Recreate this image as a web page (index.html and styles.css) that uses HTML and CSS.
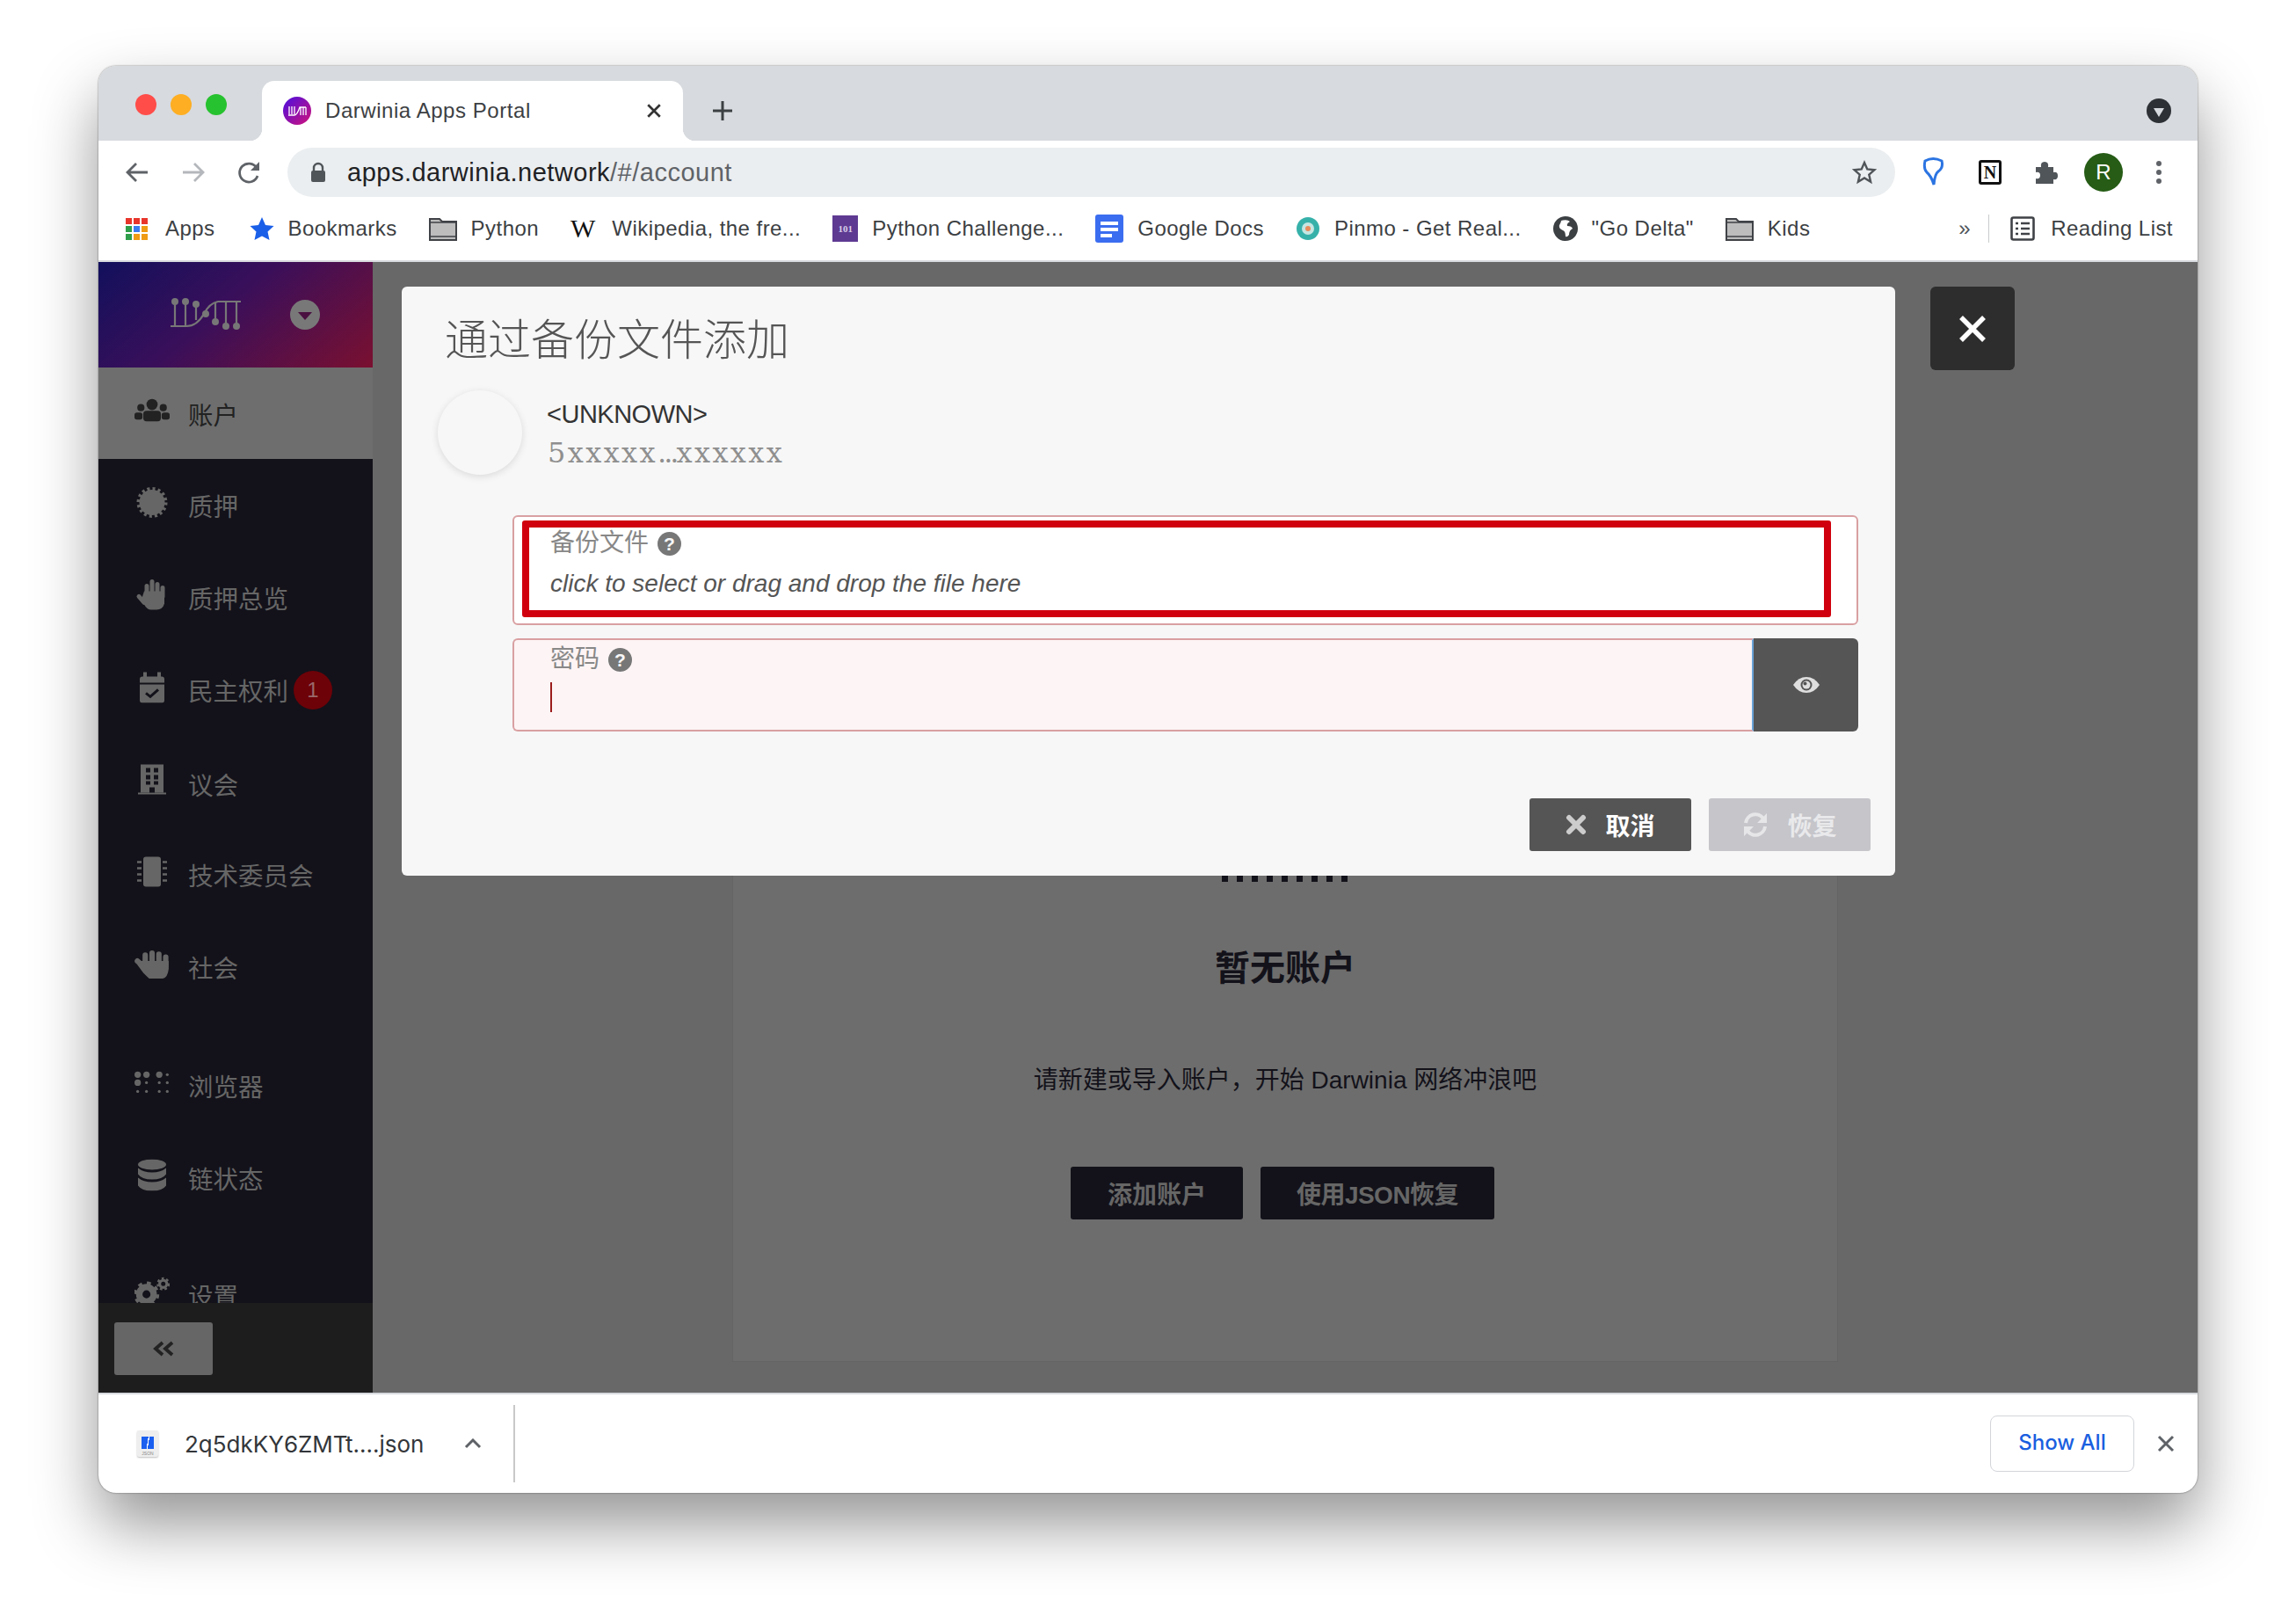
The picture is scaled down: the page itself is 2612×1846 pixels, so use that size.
FILE: index.html
```html
<!DOCTYPE html>
<html lang="zh">
<head>
  <meta charset="UTF-8">
  <title>Darwinia Apps Portal</title>
  <link rel="stylesheet" href="styles.css">
</head>
<body>
  <div class="window">
    <div class="tabbar">
      <div class="traffic">
        <span class="light red"></span>
        <span class="light yellow"></span>
        <span class="light green"></span>
      </div>
      <div class="tab">
        <svg class="favicon" viewBox="0 0 32 32">
          <defs><linearGradient id="fav" x1="0" y1="0" x2="1" y2="1"><stop offset="0" stop-color="#4a0fe0"/><stop offset="1" stop-color="#d1127a"/></linearGradient></defs>
          <circle cx="16" cy="16" r="16" fill="url(#fav)"/>
          <path d="M7 11v9M10 11v9M13 11v9M6 21h7q3 0 6-9h7M20 12v9M23 12v9M26 12v9" stroke="#fff" stroke-width="1.3" fill="none"/>
        </svg>
        <span class="tab-title">Darwinia Apps Portal</span>
        <svg class="tab-close" viewBox="0 0 16 16"><path d="M2 2l12 12M14 2L2 14" stroke="#333" stroke-width="2.4"/></svg>
      </div>
      <svg class="new-tab" viewBox="0 0 24 24"><path d="M12 1v22M1 12h22" stroke="#3c4043" stroke-width="3"/></svg>
      <span class="tab-menu"><svg viewBox="0 0 28 28"><circle cx="14" cy="14" r="14" fill="#2d3034"/><path d="M8 11h12l-6 10z" fill="#d7dade"/></svg></span>
    </div>

    <div class="toolbar">
      <svg class="nav-icon" viewBox="0 0 28 28"><path d="M26 14H4M13 4L3 14l10 10" stroke="#5f6368" stroke-width="2.8" fill="none"/></svg>
      <svg class="nav-icon" viewBox="0 0 28 28"><path d="M2 14h22M15 4l10 10-10 10" stroke="#b4b7bb" stroke-width="2.8" fill="none"/></svg>
      <svg class="nav-icon" viewBox="0 0 28 28"><path d="M23 18a10.500 10.500 0 1 1-1-9" stroke="#5f6368" stroke-width="2.8" fill="none"/><path d="M25 2v10H15z" fill="#5f6368"/></svg>
      <div class="omnibox">
        <svg class="lock" viewBox="0 0 18 24"><path d="M4 10V7a5 5 0 0 1 10 0v3" stroke="#50555a" stroke-width="2.400" fill="none"/><rect x="1" y="10" width="16" height="13" rx="2" fill="#50555a"/></svg>
        <span class="url"><b>apps.darwinia.network</b>/#/account</span>
        <svg class="star" viewBox="0 0 28 28"><path d="M14 3l3.300 7.500 8 .8-6 5.400 1.800 8L14 20.500 6.900 24.700l1.800-8-6-5.400 8-.8z" stroke="#50555a" stroke-width="2.400" fill="none"/></svg>
      </div>
      <div class="extensions">
        <svg class="ext pin" viewBox="0 0 28 36"><path d="M5 5q9-5 19 0 2 8-4 12-4 3-5 15-3-10-8-14Q3 14 5 5z" stroke="#2b74e2" stroke-width="3" fill="none"/></svg>
        <span class="ext notion">N</span>
        <svg class="ext puzzle" viewBox="0 0 28 28"><path d="M3 8h6q-1-6 4-6t4 6h6v6q5-1 5 4t-5 4v5H3v-6q5 1 5-3.500T3 14z" fill="#50555a"/></svg>
        <span class="avatar">R</span>
        <span class="dots"><i></i><i></i><i></i></span>
      </div>
    </div>

    <div class="bookmarks">
      <div class="bm bm-apps">
        <span class="apps-grid">
          <i class="c-r"></i><i class="c-r"></i><i class="c-r"></i>
          <i class="c-g"></i><i class="c-b"></i><i class="c-o"></i>
          <i class="c-g"></i><i class="c-o"></i><i class="c-o"></i>
        </span>
        <span>Apps</span>
      </div>
      <div class="bm">
        <svg class="bm-icon" viewBox="0 0 28 28"><path d="M14 1l4 9 9.500 1-7 6.500 2 9.500L14 22.500 5.500 27l2-9.500-7-6.500 9.500-1z" fill="#1a5fe8"/></svg>
        <span>Bookmarks</span>
      </div>
      <div class="bm">
        <svg class="bm-icon folder" viewBox="0 0 32 28"><path d="M1 3h11l3 3h16v21H1z" fill="#bdbdbd" stroke="#3f4246" stroke-width="2"/><path d="M1 7h30M1 23h30" stroke="#3f4246" stroke-width="1.500"/></svg>
        <span>Python</span>
      </div>
      <div class="bm bm-wiki">
        <span class="wiki">W</span>
        <span>Wikipedia, the fre...</span>
      </div>
      <div class="bm">
        <span class="py101">101</span>
        <span>Python Challenge...</span>
      </div>
      <div class="bm">
        <svg class="bm-icon docs" viewBox="0 0 32 32"><rect width="32" height="32" rx="3" fill="#3b6df0"/><path d="M6 8h20v4H6zM6 15h20v4H6zM6 22h13v4H6z" fill="#fff"/></svg>
        <span>Google Docs</span>
      </div>
      <div class="bm">
        <svg class="bm-icon" viewBox="0 0 28 28"><circle cx="14" cy="14" r="13" fill="#36b1aa"/><circle cx="14" cy="14" r="7" fill="#c5e6e2"/><circle cx="14" cy="14" r="3" fill="#e88a5a"/></svg>
        <span>Pinmo - Get Real...</span>
      </div>
      <div class="bm">
        <svg class="bm-icon" viewBox="0 0 28 28"><circle cx="14" cy="14" r="14" fill="#3c4043"/><path d="M9 5q7-2 10 1-4 2-3 5 5 0 6 3-4 2-4 7-2 3-4 2 0-6-3-7-5-2-4-6 2-3 2-5z" fill="#fff"/></svg>
        <span>"Go Delta"</span>
      </div>
      <div class="bm">
        <svg class="bm-icon folder" viewBox="0 0 32 28"><path d="M1 3h11l3 3h16v21H1z" fill="#bdbdbd" stroke="#3f4246" stroke-width="2"/><path d="M1 7h30M1 23h30" stroke="#3f4246" stroke-width="1.500"/></svg>
        <span>Kids</span>
      </div>
      <div class="bm-more">»</div>
      <div class="bm-reading">
        <svg class="bm-icon" viewBox="0 0 28 28"><rect x="1.500" y="1.500" width="25" height="25" rx="2" fill="none" stroke="#3f4246" stroke-width="2.600"/><path d="M6 8h3M6 14h3M6 20h3M12 8h10M12 14h10M12 20h10" stroke="#3f4246" stroke-width="2.600"/></svg>
        <span>Reading List</span>
      </div>
    </div>

    <div class="app">
      <aside class="sidebar">
        <div class="side-head">
          <svg class="logo" viewBox="0 0 82 38" fill="none" stroke="#777" stroke-width="2.200">
            <path d="M1 32h18q12 0 20-14 6-12 16-14h26"/>
            <path d="M6 4v27M18 4v27M30 6v19M52 5v24M64 5v28M76 5v28"/>
            <g fill="#777" stroke="none"><circle cx="6" cy="4" r="4"/><circle cx="18" cy="4" r="4"/><circle cx="30" cy="7" r="4"/><circle cx="41" cy="18" r="4"/><circle cx="52" cy="27" r="4"/><circle cx="64" cy="32" r="4"/><circle cx="76" cy="32" r="4"/></g>
          </svg>
          <span class="side-drop"><svg viewBox="0 0 34 34"><circle cx="17" cy="17" r="17" fill="#787878"/><path d="M9 14h16l-8 9z" fill="#4a1040"/></svg></span>
        </div>
        <nav class="side-nav">
          <a class="side-item active">
            <svg class="side-icon" viewBox="0 0 44 28" fill="#222"><circle cx="22" cy="7" r="7"/><circle cx="8" cy="11" r="4.500"/><circle cx="36" cy="11" r="4.500"/><rect x="11" y="15" width="22" height="13" rx="4"/><rect y="17" width="10" height="9" rx="3"/><rect x="34" y="17" width="10" height="9" rx="3"/></svg>
            <span>账户</span>
          </a>
          <a class="side-item">
            <svg class="side-icon" viewBox="0 0 36 36"><circle cx="18" cy="18" r="14.500" fill="#666"/><circle cx="18" cy="18" r="15.500" fill="none" stroke="#666" stroke-width="4" stroke-dasharray="3 3.090"/></svg>
            <span>质押</span>
          </a>
          <a class="side-item">
            <svg class="side-icon" viewBox="0 0 36 36"><g stroke="#666" stroke-width="5" stroke-linecap="round"><path d="M12 18V8M18 16V3M24 16V6M30 20V10M3 20l6 7"/></g><path d="M9 14h23v14q-2 7-9 7h-6q-5 0-8-6l-3-6z" fill="#666"/></svg>
            <span>质押总览</span>
          </a>
          <a class="side-item">
            <svg class="side-icon" viewBox="0 0 32 36"><path d="M2 9q0-3 3-3h22q3 0 3 3v4H2zM2 15h28v18q0 3-3 3H5q-3 0-3-3z" fill="#666"/><path d="M8 1v6M24 1v6" stroke="#666" stroke-width="4"/><path d="M9 25l5 4 9-8" stroke="#13121a" stroke-width="3" fill="none"/></svg>
            <span>民主权利</span>
            <em class="badge">1</em>
          </a>
          <a class="side-item low">
            <svg class="side-icon" viewBox="0 0 32 36"><path d="M3 1h26v32H3z" fill="#666"/><path d="M0 33h32v2H0z" fill="#666"/><path d="M9 5h5v5H9zM18 5h5v5h-5zM9 13h5v5H9zM18 13h5v5h-5zM9 20h5v4H9zM18 20h5v4h-5zM13 27h6v6h-6z" fill="#13121a"/></svg>
            <span>议会</span>
          </a>
          <a class="side-item">
            <svg class="side-icon" viewBox="0 0 36 36"><rect x="8" y="1" width="20" height="34" rx="3" fill="#666"/><path d="M1 7h5M1 14h5M1 21h5M1 28h5M30 7h5M30 14h5M30 21h5M30 28h5" stroke="#666" stroke-width="2.500"/></svg>
            <span>技术委员会</span>
          </a>
          <a class="side-item">
            <svg class="side-icon" viewBox="0 0 36 30"><g stroke="#666" stroke-width="5.500" stroke-linecap="round"><path d="M3 12l7 6M11 6v9M18 4v9M25 5v9M32 8v9"/></g><path d="M6 12h29v8q-1 9-6 10H15q-3-3-6-6l-6-8z" fill="#666"/></svg>
            <span>社会</span>
          </a>
          <a class="side-item group">
            <svg class="side-icon" viewBox="0 0 44 28" fill="#666"><circle cx="4" cy="4" r="4"/><circle cx="15" cy="4" r="4"/><circle cx="31" cy="4" r="4"/><circle cx="41" cy="4" r="1.800"/><circle cx="4" cy="14" r="4"/><circle cx="15" cy="14" r="1.800"/><circle cx="31" cy="14" r="1.800"/><circle cx="41" cy="14" r="1.800"/><circle cx="4" cy="25" r="1.800"/><circle cx="15" cy="25" r="1.800"/><circle cx="31" cy="25" r="1.800"/><circle cx="41" cy="25" r="1.800"/></svg>
            <span>浏览器</span>
          </a>
          <a class="side-item">
            <svg class="side-icon" viewBox="0 0 32 36" fill="#666"><ellipse cx="16" cy="6" rx="16" ry="6"/><path d="M0 10q6 5 16 5t16-5v7q-4 6-16 6T0 17zM0 21q6 5 16 5t16-5v9q-4 6-16 6T0 30z"/></svg>
            <span>链状态</span>
          </a>
          <a class="side-item group-last">
            <svg class="side-icon" viewBox="0 0 44 36"><circle cx="15" cy="21" r="9" fill="none" stroke="#666" stroke-width="8"/><circle cx="15" cy="21" r="14" fill="none" stroke="#666" stroke-width="4" stroke-dasharray="5 6"/><circle cx="36" cy="8" r="4.500" fill="none" stroke="#666" stroke-width="3.500"/><circle cx="36" cy="8" r="7" fill="none" stroke="#666" stroke-width="2.500" stroke-dasharray="3 3"/></svg>
            <span>设置</span>
          </a>
        </nav>
        <div class="side-foot">
          <button class="collapse"><svg viewBox="0 0 24 18"><path d="M11 2L3 9l8 7M22 2l-8 7 8 7" stroke="#222" stroke-width="3.800" fill="none"/></svg></button>
        </div>
      </aside>

      <main class="main">
        <section class="empty-card">
          <div class="empty-strip"></div>
          <h2 class="empty-title">暂无账户</h2>
          <p class="empty-text">请新建或导入账户，开始 Darwinia 网络冲浪吧</p>
          <div class="empty-actions">
            <button class="dark-btn add">添加账户</button>
            <button class="dark-btn restore">使用JSON恢复</button>
          </div>
        </section>
      </main>

      <div class="modal">
        <h1 class="modal-title">通过备份文件添加</h1>
        <div class="account-row">
          <div class="account-avatar"></div>
          <div class="account-info">
            <div class="account-name">&lt;UNKNOWN&gt;</div>
            <div class="account-addr">5xxxxx<span class="addr-dots">...</span>xxxxxx</div>
          </div>
        </div>
        <div class="fields">
          <div class="field file-field">
            <div class="highlight"></div>
            <label>备份文件 <span class="help">?</span></label>
            <div class="file-hint">click to select or drag and drop the file here</div>
          </div>
          <div class="field-group">
            <div class="field pass-field">
              <label>密码 <span class="help">?</span></label>
              <div class="caret"></div>
            </div>
            <button class="eye-btn">
              <svg viewBox="0 0 32 20"><path d="M1 10q6-9 15-9t15 9q-6 9-15 9T1 10z" fill="#dedede"/><circle cx="16" cy="10" r="6.500" fill="#555"/><circle cx="16" cy="10" r="4.500" fill="#dedede"/><circle cx="14.500" cy="8.500" r="2" fill="#555"/></svg>
            </button>
          </div>
        </div>
        <div class="modal-actions">
          <button class="act-btn cancel">
            <svg viewBox="0 0 24 24"><path d="M4 4l16 16M20 4L4 20" stroke="#ccc" stroke-width="6" stroke-linecap="round"/></svg>
            取消
          </button>
          <button class="act-btn confirm">
            <svg viewBox="0 0 30 30"><path d="M4 13A11 11 0 0 1 24 8M26 17A11 11 0 0 1 6 22" stroke="#e6e6e8" stroke-width="4" fill="none"/><path d="M28 2v11H17zM2 28V17h11z" fill="#e6e6e8"/></svg>
            恢复
          </button>
        </div>
      </div>

      <button class="modal-close"><svg viewBox="0 0 32 32"><path d="M3 3l26 26M29 3L3 29" stroke="#fff" stroke-width="5.500"/></svg></button>
    </div>

    <div class="downloads">
      <div class="dl-item">
        <span class="dl-file"><i class="dl-blue"></i><i class="dl-type">JSON</i></span>
        <span class="dl-name">2q5dkKY6ZMTt....json</span>
        <svg class="dl-chev" viewBox="0 0 20 12"><path d="M2 10l8-8 8 8" stroke="#5f6368" stroke-width="3" fill="none"/></svg>
      </div>
      <button class="show-all">Show All</button>
      <svg class="dl-close" viewBox="0 0 20 20"><path d="M2 2l16 16M18 2L2 18" stroke="#5f6368" stroke-width="3"/></svg>
    </div>
  </div>
</body>
</html>
```
FILE: styles.css
```css
* {
  box-sizing: border-box;
}
body {
  margin: 0;
  background: #fff;
  padding: 75px 112px 0;
  height: 1846px;
  overflow: hidden;
  font-family: "Liberation Sans", "Noto Sans CJK SC", sans-serif;
}
button {
  font-family: inherit;
  border: none;
  padding: 0;
}
svg {
  display: block;
  flex: none;
}
.window {
  width: 2388px;
  height: 1623px;
  border-radius: 20px;
  display: flex;
  flex-direction: column;
  overflow: hidden;
  background: #fff;
  box-shadow: 0 0 2px rgba(0, 0, 0, .55), 0 36px 72px rgba(0, 0, 0, .42);
}

/* tabs */
.tabbar {
  height: 85px;
  flex: none;
  background: #d7dade;
  display: flex;
  align-items: flex-end;
  position: relative;
}
.traffic {
  position: absolute;
  left: 42px;
  top: 32px;
  display: flex;
  gap: 16px;
}
.light {
  width: 24px;
  height: 24px;
  border-radius: 50%;
}
.red { background: #ff4d4a; }
.yellow { background: #fdae23; }
.green { background: #27c22f; }
.tab {
  margin-left: 186px;
  width: 479px;
  height: 68px;
  background: #fff;
  border-radius: 14px 14px 0 0;
  display: flex;
  align-items: center;
  padding: 0 24px;
  position: relative;
}
.tab::before, .tab::after {
  content: "";
  position: absolute;
  bottom: 0;
  width: 14px;
  height: 14px;
}
.tab::before {
  left: -14px;
  background: radial-gradient(circle at 0 0, #d7dade 14px, #fff 14.500px);
}
.tab::after {
  right: -14px;
  background: radial-gradient(circle at 100% 0, #d7dade 14px, #fff 14.500px);
}
.favicon {
  width: 32px;
  height: 32px;
}
.tab-title {
  margin-left: 16px;
  font-size: 24px;
  letter-spacing: .55px;
  color: #3c4043;
  flex: 1;
}
.tab-close {
  width: 18px;
  height: 18px;
}
.new-tab {
  width: 24px;
  height: 24px;
  margin: 0 0 22px 33px;
}
.tab-menu {
  margin: 0 30px 20px auto;
}
.tab-menu svg {
  width: 28px;
  height: 28px;
}

/* toolbar */
.toolbar {
  height: 64px;
  flex: none;
  display: flex;
  align-items: flex-start;
  padding: 8px 0 0 30px;
}
.nav-icon {
  width: 28px;
  height: 28px;
  margin: 14px 36px 0 0;
}
.omnibox {
  margin-left: -7px;
  width: 1829px;
  height: 56px;
  border-radius: 28px;
  background: #ebeef0;
  display: flex;
  align-items: center;
  padding: 0 21px 0 26px;
}
.lock {
  width: 18px;
  height: 24px;
}
.url {
  margin-left: 24px;
  font-size: 29px;
  letter-spacing: .5px;
  color: #5f6368;
  flex: 1;
}
.url b {
  font-weight: normal;
  color: #202124;
}
.star {
  width: 28px;
  height: 28px;
}
.extensions {
  display: flex;
  align-items: center;
  height: 56px;
  margin-left: 29px;
}
.ext {
  flex: none;
}
.pin {
  width: 28px;
  height: 36px;
}
.notion {
  width: 26px;
  height: 28px;
  margin-left: 38px;
  border: 3px solid #111;
  border-radius: 3px;
  font-family: "Liberation Serif", serif;
  font-weight: bold;
  font-size: 20px;
  line-height: 22px;
  text-align: center;
  color: #111;
}
.puzzle {
  width: 28px;
  height: 28px;
  margin-left: 36px;
}
.avatar {
  width: 44px;
  height: 44px;
  margin-left: 30px;
  border-radius: 50%;
  background: #265c16;
  color: #fff;
  font-size: 24px;
  line-height: 44px;
  text-align: center;
}
.dots {
  margin-left: 38px;
  display: flex;
  flex-direction: column;
  gap: 4px;
}
.dots i {
  width: 6px;
  height: 6px;
  border-radius: 50%;
  background: #5f6368;
}

/* bookmarks */
.bookmarks {
  height: 74px;
  flex: none;
  display: flex;
  align-items: center;
  padding-left: 31px;
  gap: 36px;
  font-size: 24px;
  letter-spacing: .45px;
  color: #3c4043;
  border-bottom: 2px solid #d7dade;
}
.bm {
  display: flex;
  align-items: center;
  gap: 16px;
  white-space: nowrap;
}
.bm-apps {
  gap: 20px;
  margin-right: 3px;
}
.bm-wiki {
  gap: 19px;
}
.apps-grid {
  width: 25px;
  display: grid;
  grid-template-columns: repeat(3, 7px);
  gap: 2px;
}
.apps-grid i {
  height: 7px;
}
.c-r { background: #e8352b; }
.c-g { background: #2f9e4a; }
.c-b { background: #3a7cf0; }
.c-o { background: #ef9b14; }
.bm-icon {
  width: 28px;
  height: 28px;
}
.bm-icon.folder {
  width: 32px;
}
.bm-icon.docs {
  width: 32px;
  height: 32px;
}
.wiki {
  font-family: "Liberation Serif", serif;
  font-size: 30px;
  line-height: 30px;
  letter-spacing: 0;
  color: #111;
}
.py101 {
  width: 29px;
  height: 30px;
  background: #5e3a92;
  color: #d8cfe8;
  font-family: "Liberation Serif", serif;
  font-size: 11px;
  font-weight: bold;
  letter-spacing: 0;
  line-height: 30px;
  text-align: center;
}
.bm-more {
  margin-left: auto;
  color: #50555a;
}
.bm-reading {
  display: flex;
  align-items: center;
  gap: 18px;
  height: 32px;
  margin: 0 28px 0 -16px;
  padding-left: 24px;
  border-left: 1px solid #c8cacd;
}

/* app behind the dialog */
.app {
  flex: 1;
  display: flex;
  position: relative;
  overflow: hidden;
  min-height: 0;
}
.sidebar {
  width: 312px;
  flex: none;
  background: #13121a;
  display: flex;
  flex-direction: column;
}
.side-head {
  height: 120px;
  flex: none;
  background: linear-gradient(140deg, #12105c 0%, #3a0f5a 45%, #7a1030 100%);
  display: flex;
  align-items: center;
  padding-left: 81px;
}
.logo {
  width: 82px;
  height: 38px;
}
.side-drop {
  margin-left: 55px;
}
.side-drop svg {
  width: 34px;
  height: 34px;
}
.side-nav {
  flex: 1;
  min-height: 0;
  overflow: hidden;
}
.side-item {
  height: 105px;
  display: flex;
  align-items: center;
  padding-left: 102px;
  position: relative;
  color: #666;
  font-size: 28.5px;
  white-space: nowrap;
}
.side-item.active {
  height: 104px;
  background: #6e6e6e;
  color: #222;
}
.side-item.low span {
  padding-top: 3px;
}
.side-item.group {
  margin-top: 30px;
}
.side-item.group-last {
  margin-top: 28px;
}
.side-icon {
  position: absolute;
  left: 41px;
  top: 50%;
  width: 40px;
  height: 36px;
  transform: translate(0, -60%);
}
.badge {
  width: 44px;
  height: 44px;
  margin-left: 6px;
  border-radius: 50%;
  background: #6d0208;
  color: #99696b;
  font-style: normal;
  font-size: 24px;
  line-height: 44px;
  text-align: center;
}
.side-foot {
  height: 102px;
  flex: none;
  background: #1d1d1d;
  padding: 22px 0 0 18px;
}
.collapse {
  width: 112px;
  height: 60px;
  border-radius: 3px;
  background: #666;
  display: flex;
  align-items: center;
  justify-content: center;
}
.collapse svg {
  width: 24px;
  height: 18px;
}
.main {
  flex: 1;
  background: #686868;
  display: flex;
  justify-content: center;
  align-items: flex-start;
}
.empty-card {
  width: 1258px;
  margin-top: 500px;
  height: 751px;
  background: #6d6d6d;
  border: 1px solid #646464;
  padding-top: 197px;
  text-align: center;
  color: #13121a;
}
.empty-strip {
  width: 144px;
  height: 7px;
  margin: 0 auto;
  background: repeating-linear-gradient(90deg, #13121a 0 7px, transparent 7px 17px);
}
.empty-title {
  margin: 70px 0 0;
  font-size: 40px;
  line-height: 56px;
  font-weight: bold;
}
.empty-text {
  margin: 80px 0 0;
  font-size: 28px;
  line-height: 40px;
}
.empty-actions {
  margin-top: 78px;
  display: flex;
  justify-content: center;
  gap: 20px;
  padding-right: 6px;
}
.dark-btn {
  height: 60px;
  border-radius: 3px;
  background: #13121a;
  color: #666;
  font-size: 28px;
  font-weight: bold;
}
.dark-btn.add {
  width: 196px;
}
.dark-btn.restore {
  width: 266px;
  letter-spacing: -.5px;
}

/* dialog */
.modal {
  position: absolute;
  left: 345px;
  top: 28px;
  width: 1699px;
  height: 670px;
  border-radius: 6px;
  background: #f7f7f7;
  padding-top: 27px;
}
.modal-title {
  margin: 0 0 0 49px;
  font-size: 49px;
  line-height: 68px;
  font-weight: 300;
  color: #555;
}
.account-row {
  margin: 23px 0 0 41px;
  display: flex;
  align-items: center;
  gap: 28px;
}
.account-avatar {
  width: 96px;
  height: 96px;
  border-radius: 50%;
  background: #f7f7f7;
  box-shadow: 0 2px 8px rgba(0, 0, 0, .12);
}
.account-name {
  font-size: 29px;
  line-height: 36px;
  letter-spacing: -.5px;
  color: #333;
  padding-top: 3px;
}
.account-addr {
  margin: 6px 0 0 1px;
  font-family: "DejaVu Serif", serif;
  font-size: 32px;
  line-height: 40px;
  letter-spacing: 2.4px;
  color: #8f8f8f;
}
.addr-dots {
  letter-spacing: -3px;
}
.fields {
  margin: 46px 42px 0 126px;
  display: flex;
  flex-direction: column;
  gap: 15px;
}
.field {
  border: 2px solid #d9a0a2;
  border-radius: 6px;
  padding-left: 41px;
}
.field label {
  display: flex;
  align-items: center;
  gap: 10px;
  font-size: 28px;
  line-height: 36px;
  color: #888;
}
.help {
  width: 27px;
  height: 27px;
  border-radius: 50%;
  background: #777;
  color: #f7f7f7;
  font-size: 21px;
  line-height: 27px;
  font-weight: bold;
  text-align: center;
}
.file-field {
  height: 125px;
  background: #fff;
  padding-top: 12px;
  position: relative;
}
.highlight {
  position: absolute;
  left: 9px;
  top: 4px;
  width: 1489px;
  height: 110px;
  border: 8px solid #d0000e;
  border-radius: 3px;
}
.file-hint {
  margin-top: 10px;
  font-size: 28px;
  line-height: 36px;
  font-style: italic;
  color: #555;
}
.field-group {
  display: flex;
  height: 106px;
}
.pass-field {
  flex: 1;
  background: #fdf4f5;
  border-right: 2px solid #6aa3d8;
  border-radius: 6px 0 0 6px;
  padding-top: 4px;
}
.caret {
  width: 2px;
  height: 34px;
  margin: 8px 0 0 0;
  background: #9b1c1c;
}
.eye-btn {
  width: 119px;
  background: #555;
  border-radius: 0 6px 6px 0;
  display: flex;
  align-items: center;
  justify-content: center;
}
.eye-btn svg {
  width: 32px;
  height: 20px;
}
.modal-actions {
  margin: 76px 28px 0 0;
  display: flex;
  justify-content: flex-end;
  gap: 20px;
}
.act-btn {
  width: 184px;
  height: 60px;
  border-radius: 3px;
  display: flex;
  align-items: center;
  justify-content: center;
  gap: 21px;
  font-size: 28px;
  font-weight: bold;
  color: #fff;
}
.act-btn svg {
  width: 24px;
  height: 24px;
}
.cancel {
  background: #555;
}
.confirm {
  background: #c5c5ca;
  color: #e9e9eb;
}
.confirm svg {
  width: 30px;
  height: 30px;
}
.modal-close {
  position: absolute;
  left: 2084px;
  top: 28px;
  width: 96px;
  height: 95px;
  border-radius: 6px;
  background: #2d2d2d;
  display: flex;
  align-items: center;
  justify-content: center;
}
.modal-close svg {
  width: 32px;
  height: 32px;
}

/* downloads bar */
.downloads {
  height: 114px;
  flex: none;
  border-top: 2px solid #d7dade;
  display: flex;
  align-items: center;
  padding: 0 26px 0 44px;
}
.dl-item {
  height: 88px;
  width: 430px;
  border-right: 2px solid #c8c8c8;
  display: flex;
  align-items: center;
}
.dl-file {
  width: 24px;
  height: 30px;
  background: #eee;
  border-radius: 2px;
  box-shadow: 0 1px 2px rgba(0, 0, 0, .25);
  position: relative;
  flex: none;
}
.dl-blue {
  position: absolute;
  left: 5px;
  top: 7px;
  width: 14px;
  height: 14px;
  background: linear-gradient(100deg, #1a5ff0 48%, #fff 48% 56%, #1a5ff0 56%);
}
.dl-type {
  position: absolute;
  left: 0;
  right: 0;
  bottom: 1px;
  font-style: normal;
  font-size: 5px;
  line-height: 6px;
  text-align: center;
  color: #888;
}
.dl-name {
  margin-left: 30px;
  font-family: Inter, sans-serif;
  font-size: 26px;
  color: #33363a;
}
.dl-chev {
  width: 20px;
  height: 12px;
  margin-left: 46px;
}
.show-all {
  margin-left: auto;
  width: 164px;
  height: 64px;
  border: 1.5px solid #d3d5da;
  border-radius: 8px;
  background: #fff;
  font-family: Inter, sans-serif;
  font-weight: 500;
  font-size: 24px;
  color: #1a5fe0;
  padding-bottom: 3px;
}
.dl-close {
  width: 20px;
  height: 20px;
  margin-left: 26px;
}
```
